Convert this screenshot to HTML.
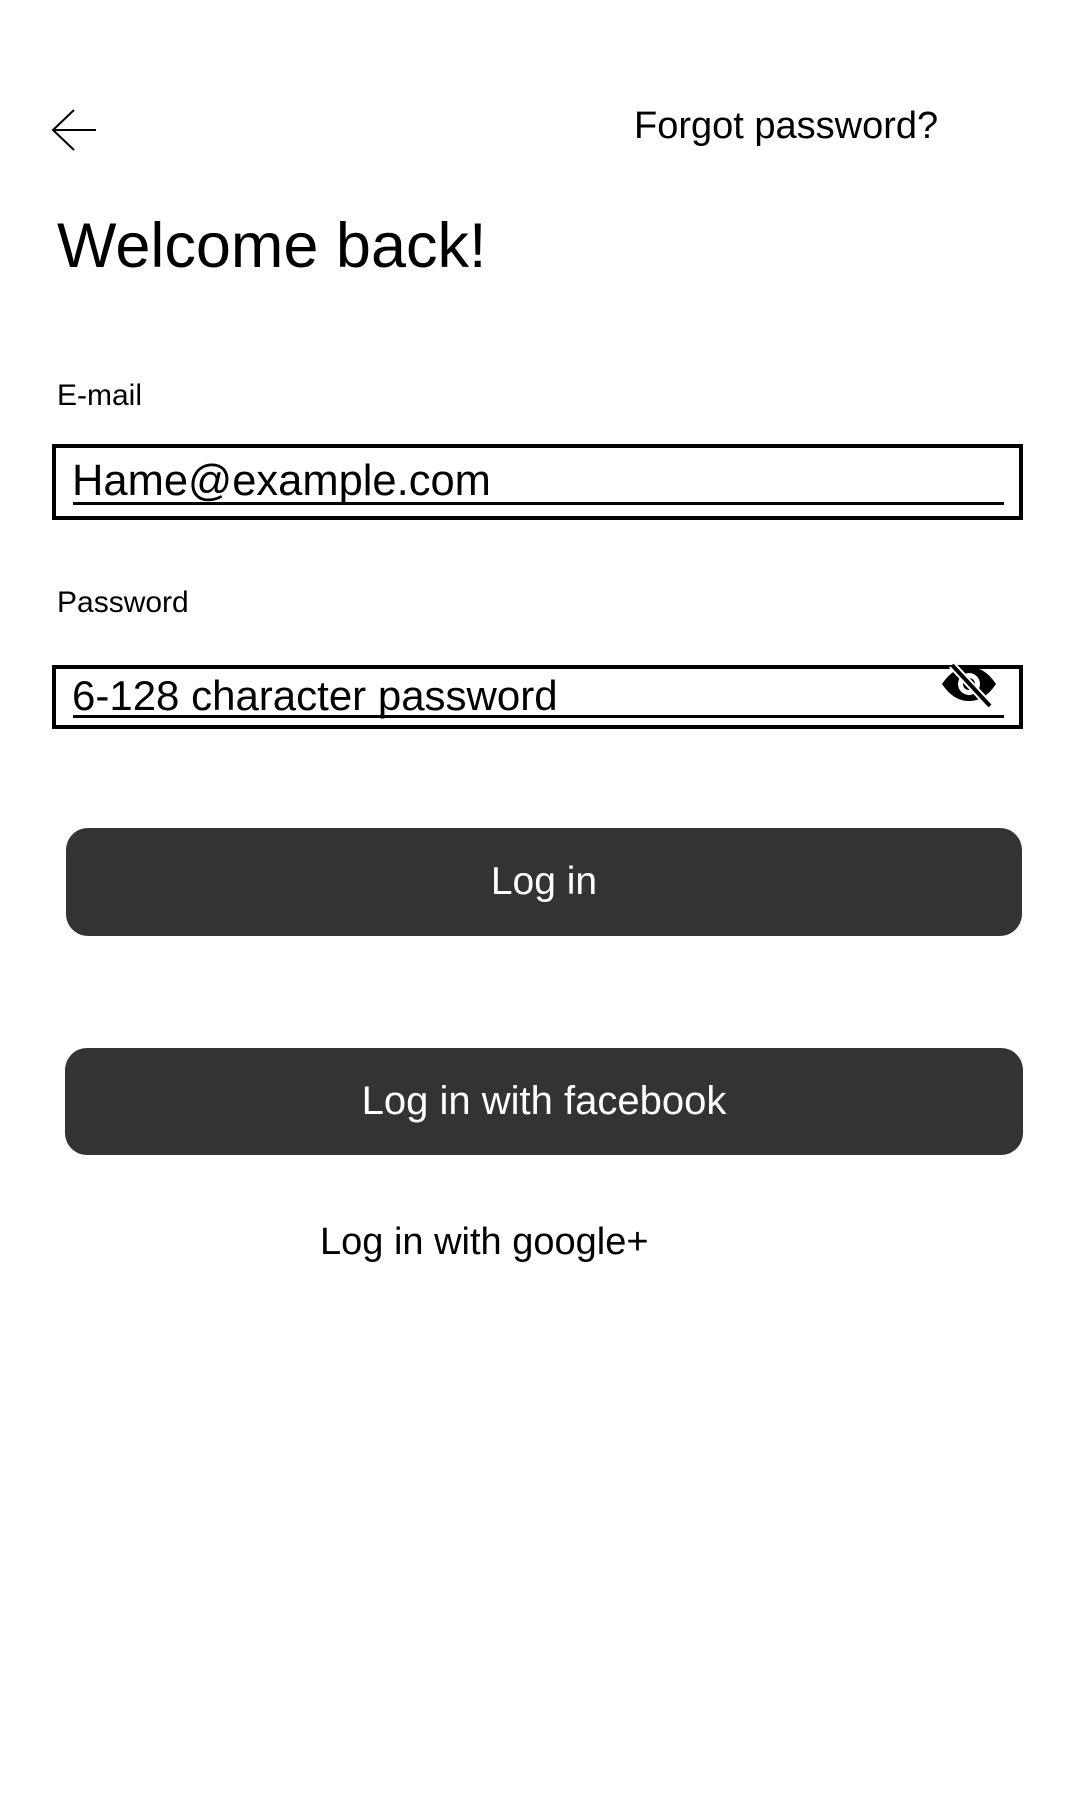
<!DOCTYPE html>
<html><head><meta charset="utf-8"><style>
html,body{margin:0;padding:0;background:#fff;width:1080px;height:1800px;overflow:hidden;font-family:"Liberation Sans",Arial,sans-serif;color:#000}
.a{position:absolute;white-space:nowrap}
.box{position:absolute;left:52px;width:963px;border:4px solid #000;box-sizing:content-box}
.btn{position:absolute;background:#333;border-radius:22px;color:#fff;text-align:center;font-size:39px}
</style></head><body>
<svg class="a" style="left:50px;top:108px" width="48" height="44" viewBox="0 0 48 44"><path d="M46 22H4M24 2L3 22L24 42" fill="none" stroke="#000" stroke-width="2"/></svg>
<div class="a" style="left:634px;top:104px;font-size:38px;line-height:44px">Forgot password?</div>
<div class="a" style="left:57px;top:210px;font-size:63px;line-height:72px">Welcome back!</div>
<div class="a" style="left:57px;top:378px;font-size:30px;line-height:36px">E-mail</div>
<div class="box" style="top:444px;height:68px"></div>
<div class="a" style="left:72px;top:455px;font-size:43.5px;line-height:52px">Hame@example.com</div>
<div class="a" style="left:73px;top:502px;width:931px;height:3px;background:#000"></div>
<div class="a" style="left:57px;top:585px;font-size:30px;line-height:36px">Password</div>
<div class="box" style="top:665px;height:56px"></div>
<div class="a" style="left:72px;top:671px;font-size:42px;line-height:50px">6-128 character password</div>
<div class="a" style="left:73px;top:715px;width:931px;height:3px;background:#000"></div>
<svg class="a" style="left:940px;top:662px" width="58" height="46" viewBox="0 0 58 46"><path d="M2 22C10 10 19 5 29 5S48 10 56 22C48 34 39 39 29 39S10 34 2 22Z" fill="#000"/><circle cx="29" cy="22" r="11" fill="#fff"/><circle cx="29" cy="22" r="6" fill="#000"/><path d="M12 3L50 44" stroke="#fff" stroke-width="8"/><path d="M12 3L50 44" stroke="#000" stroke-width="4"/></svg>
<div class="btn" style="left:66px;top:828px;width:956px;height:108px;line-height:108px">Log in</div>
<div class="btn" style="left:65px;top:1048px;width:958px;height:107px;line-height:106px;font-size:40px">Log in with facebook</div>
<div class="a" style="left:320px;top:1218px;font-size:38px;line-height:48px">Log in with google+</div>
</body></html>
